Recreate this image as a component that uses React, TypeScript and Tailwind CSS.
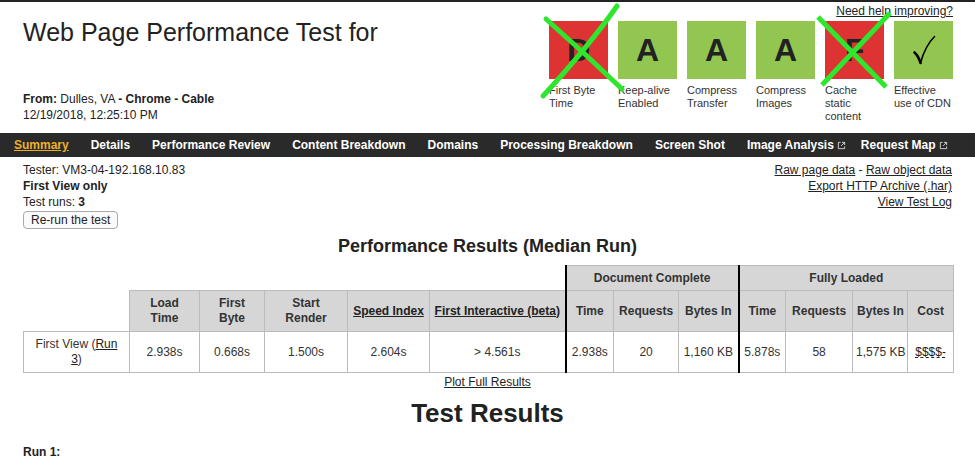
import React from "react";

const grades = [
  { g: "D", bad: true, label: ["First Byte", "Time"] },
  { g: "A", bad: false, label: ["Keep-alive", "Enabled"] },
  { g: "A", bad: false, label: ["Compress", "Transfer"] },
  { g: "A", bad: false, label: ["Compress", "Images"] },
  { g: "F", bad: true, label: ["Cache", "static", "content"] },
  { g: "check", bad: false, label: ["Effective", "use of CDN"] },
];

function ExtIcon() {
  return (
    <svg viewBox="0 0 10 10" className="ml-[3px] -mr-[7px] h-[9px] w-[9px]" fill="none" stroke="#d8d8d8" strokeWidth="1">
      <path d="M4 1.5H1.5v7h7V6" />
      <path d="M5.5 1.5h3v3M8.5 1.5 4.5 5.5" />
    </svg>
  );
}

function Check() {
  return (
    <svg viewBox="0 0 24 30" className="h-[30px] w-[24px]" fill="none" stroke="#000" strokeLinecap="round">
      <path d="M2.5 17.5 C 5 19.5, 7 23, 8.5 28" strokeWidth="2.6" />
      <path d="M8.5 28 C 11.5 17, 16 8, 22.5 1.5" strokeWidth="1.6" />
    </svg>
  );
}

const th = "border border-[#bbb] bg-[#d6d6d6] px-[4px] text-center text-[12px] font-bold leading-[15px] text-[#333] whitespace-nowrap";
const td = "border border-[#bbb] px-[3px] text-center text-[12px] leading-[15px] text-[#333] whitespace-nowrap";
const thick = "border-l-2 border-l-black";

export default function App() {
  return (
    <div className="relative min-h-screen w-full border-t-2 border-[#222] bg-white font-['Liberation_Sans',Arial,sans-serif] text-[#222]">
      {/* header */}
      <header className="flex justify-between pl-[23px] pr-[22px]">
        <div className="pt-[16px]">
          <h1 className="text-[25px] leading-[28px] text-[#222]">Web Page Performance Test for</h1>
          <div className="mt-[45px] text-[12px] leading-[16px]">
            <b>From:</b> Dulles, VA <b>- Chrome - Cable</b>
          </div>
          <div className="text-[12px] leading-[16px]">12/19/2018, 12:25:10 PM</div>
        </div>

        <div className="flex flex-col items-end pt-[2px]">
          <a className="text-[12px] leading-[14px] text-[#222] underline">Need help improving?</a>
          <div className="mt-[3px] flex gap-[10px]">
            {grades.map((x, i) => (
              <div key={i} className="w-[59px]">
                <div
                  className={`flex h-[58px] items-center justify-center ${x.bad ? "bg-[#dd3333]" : "bg-[#92c650]"}`}
                >
                  {x.g === "check" ? (
                    <Check />
                  ) : (
                    <span className="text-[32px] font-bold leading-none text-[#222]">{x.g}</span>
                  )}
                </div>
                <div className="mt-[5px] text-[11px] leading-[13px] text-[#333]">
                  {x.label.map((l) => (
                    <div key={l} className="whitespace-nowrap">{l}</div>
                  ))}
                </div>
              </div>
            ))}
          </div>
        </div>
      </header>

      {/* green crosses drawn over the grades */}
      <svg className="pointer-events-none absolute left-0 top-[-2px]" width="975" height="130" fill="none" stroke="#2ee62e" strokeWidth="5">
        <path d="M546 19 C 572 42, 598 66, 622 89" strokeLinecap="round" />
        <path d="M617 6 C 603 26, 578 58, 543 96" strokeLinecap="round" />
        <path d="M818 17 L886 87" />
        <path d="M890 13 L822 85" />
      </svg>

      {/* nav */}
      <nav className="mt-[10px] flex h-[24px] items-center gap-[22px] bg-[#2a2a2a] pl-[14px] text-[12px] font-bold text-white">
        <a className="text-[#eeb02a] underline">Summary</a>
        <a>Details</a>
        <a>Performance Review</a>
        <a>Content Breakdown</a>
        <a>Domains</a>
        <a>Processing Breakdown</a>
        <a>Screen Shot</a>
        <a className="flex items-center">Image Analysis<ExtIcon /></a>
        <a className="flex items-center">Request Map<ExtIcon /></a>
      </nav>

      {/* test info */}
      <div className="flex justify-between pl-[23px] pr-[23px] pt-[5px] text-[12px] leading-[16px]">
        <div>
          <div>Tester: VM3-04-192.168.10.83</div>
          <div className="font-bold">First View only</div>
          <div>
            Test runs: <b>3</b>
          </div>
          <button className="mt-[1px] h-[18px] rounded-[4px] border border-[#aaa] bg-[#fafafa] px-[7px] text-[12px] leading-[16px] text-[#222]">
            Re-run the test
          </button>
        </div>
        <div className="text-right">
          <div>
            <a className="underline">Raw page data</a> - <a className="underline">Raw object data</a>
          </div>
          <div>
            <a className="underline">Export HTTP Archive (.har)</a>
          </div>
          <div>
            <a className="underline">View Test Log</a>
          </div>
        </div>
      </div>

      <h2 className="mt-[6px] text-center text-[18px] font-bold leading-[22px] text-[#222]">
        Performance Results (Median Run)
      </h2>

      <div className="mt-[8px] pl-[23px]">
        <table className="w-[930px] table-fixed border-collapse">
          <colgroup>
            <col className="w-[106px]" />
            <col className="w-[70px]" />
            <col className="w-[65px]" />
            <col className="w-[83px]" />
            <col className="w-[82px]" />
            <col className="w-[136px]" />
            <col className="w-[48px]" />
            <col className="w-[65px]" />
            <col className="w-[60px]" />
            <col className="w-[47px]" />
            <col className="w-[67px]" />
            <col className="w-[55px]" />
            <col className="w-[46px]" />
          </colgroup>
          <thead>
            <tr className="h-[25px]">
              <th colSpan={6} className="border-0" />
              <th colSpan={3} className={`${th} ${thick}`}>Document Complete</th>
              <th colSpan={4} className={`${th} ${thick}`}>Fully Loaded</th>
            </tr>
            <tr className="h-[41px]">
              <th className="border-0" />
              <th className={th}>Load<br />Time</th>
              <th className={th}>First<br />Byte</th>
              <th className={th}>Start<br />Render</th>
              <th className={th}><a className="text-[#222] underline">Speed Index</a></th>
              <th className={th}><a className="text-[#222] underline">First Interactive (beta)</a></th>
              <th className={`${th} ${thick}`}>Time</th>
              <th className={th}>Requests</th>
              <th className={th}>Bytes In</th>
              <th className={`${th} ${thick}`}>Time</th>
              <th className={th}>Requests</th>
              <th className={th}>Bytes In</th>
              <th className={th}>Cost</th>
            </tr>
          </thead>
          <tbody>
            <tr className="h-[41px]">
              <td className={td}>
                First View (<a className="text-[#222] underline">Run</a>
                <br />
                <a className="text-[#222] underline">3</a>)
              </td>
              <td className={td}>2.938s</td>
              <td className={td}>0.668s</td>
              <td className={td}>1.500s</td>
              <td className={td}>2.604s</td>
              <td className={td}>&gt; 4.561s</td>
              <td className={`${td} ${thick}`}>2.938s</td>
              <td className={td}>20</td>
              <td className={td}>1,160 KB</td>
              <td className={`${td} ${thick}`}>5.878s</td>
              <td className={td}>58</td>
              <td className={td}>1,575 KB</td>
              <td className={td}>
                <a className="text-[#222] underline decoration-dashed">$$$$-</a>
              </td>
            </tr>
          </tbody>
        </table>
      </div>

      <div className="mt-[2px] text-center text-[12px] leading-[14px]">
        <a className="underline">Plot Full Results</a>
      </div>

      <h1 className="mt-[9px] text-center text-[26px] font-bold leading-[30px] text-[#222]">Test Results</h1>

      <div className="mt-[16px] pl-[23px] text-[12px] font-bold leading-[16px]">Run 1:</div>
    </div>
  );
}
